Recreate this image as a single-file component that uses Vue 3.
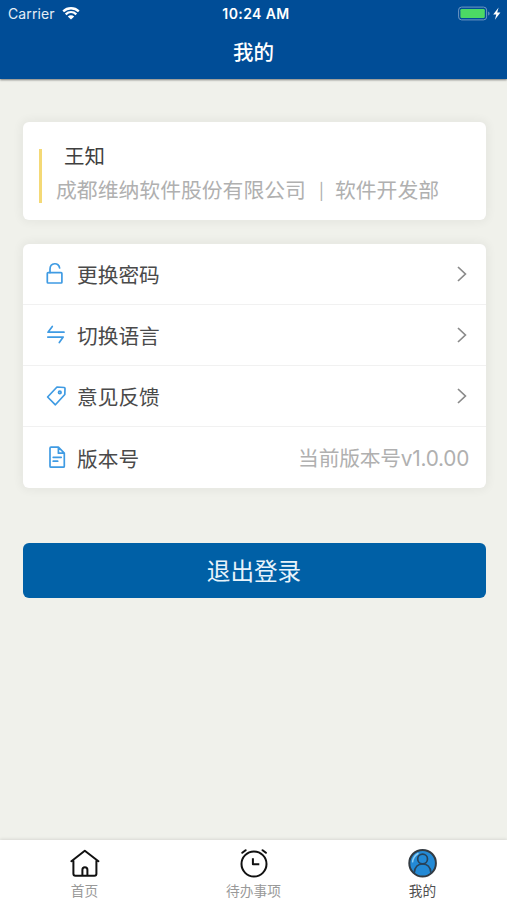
<script setup>
const rows = [
  { icon: 'lock', label: '更换密码' },
  { icon: 'swap', label: '切换语言' },
  { icon: 'tag', label: '意见反馈' },
  { icon: 'doc', label: '版本号', value: '当前版本号v1.0.00' },
]
const tabs = [
  { icon: 'home', label: '首页' },
  { icon: 'clock', label: '待办事项' },
  { icon: 'user', label: '我的', active: true },
]
</script>

<template>
  <div class="screen">
    <header class="top">
      <div class="status">
        <div class="carrier">
          <span>Carrier</span>
          <svg class="wifi" viewBox="0 0 18 13" width="18" height="13">
            <path d="M1.2 4.4C5.6.2 12.4.2 16.8 4.4M3.7 7.3c3.1-2.8 7.5-2.8 10.6 0" fill="none" stroke="#fff" stroke-width="2.3" />
            <path d="M5.8 9.5c1.9-1.6 4.5-1.6 6.4 0L9 12.6z" fill="#fff" />
          </svg>
        </div>
        <div class="time">10:24 AM</div>
        <div class="power">
          <svg viewBox="0 0 44 16" width="44" height="16">
            <rect x=".6" y="1.1" width="28" height="12.8" rx="3" fill="none" stroke="#6f97c3" stroke-width="1" />
            <rect x="2.4" y="2.9" width="24.4" height="9.2" rx="1.4" fill="#4cd964" />
            <path d="M30.2 5.4c1.8.6 1.8 3.6 0 4.2z" fill="#6f97c3" />
            <path d="M40.6 1.5 35.2 8.4h3.1l-1.4 5.3 5.5-7.2h-3.2z" fill="#fff" />
          </svg>
        </div>
      </div>
      <h1 class="title">我的</h1>
    </header>

    <main class="body">
      <section class="card profile">
        <div class="bar"></div>
        <div class="who">
          <div class="name">王知</div>
          <div class="org"><span>成都维纳软件股份有限公司</span><span class="sep">|</span><span>软件开发部</span></div>
        </div>
      </section>

      <section class="card list">
        <div v-for="row in rows" :key="row.icon" class="row">
          <svg class="icon" viewBox="0 0 22 24" width="22" height="24">
            <g v-if="row.icon === 'lock'">
              <rect x="2.3" y="10.6" width="14.6" height="10.4" rx=".8" />
              <path d="M5 10.6V7.2C5 .2 14.2.1 14.6 6" />
            </g>
            <g v-else-if="row.icon === 'swap'">
              <path d="M19 9.200H3L7.300 3.500M2.800 14.100h15.400L14.300 19.500" />
            </g>
            <g v-else-if="row.icon === 'tag'">
              <path d="M12 3 19.200 3.500q.8.100.8.900l-.2 6.100L10.400 20.800 2.600 13z" />
              <circle cx="14.800" cy="8.400" r="1.300" />
            </g>
            <g v-else>
              <path d="M13.400 1.200H6q-1 0-1 1v18q0 1 1 1h12.300q1 0 1-1V7.100zM13.400 1.400v5.800h5.700M8.200 11.300h8M8.200 15.200h4.500" />
            </g>
          </svg>
          <span class="label">{{ row.label }}</span>
          <span v-if="row.value" class="value">{{ row.value }}</span>
          <svg v-else class="chevron" viewBox="0 0 10 16" width="10" height="16">
            <path d="M1 1l7.400 7L1 15" />
          </svg>
        </div>
      </section>

      <button class="logout">退出登录</button>
    </main>

    <nav class="tabs">
      <div v-for="tab in tabs" :key="tab.icon" class="tab" :class="{ active: tab.active }">
        <svg viewBox="0 0 30 30" width="30" height="30">
          <g v-if="tab.icon === 'home'">
            <path d="M1.400 13.200 14.800 2.800 28.400 13.200M3.400 11.800v13.900q0 2 2 2h19q2 0 2-2V11.800M12.400 27.500v-5.700q0-2.500 2.500-2.500t2.500 2.500v5.700" />
          </g>
          <g v-else-if="tab.icon === 'clock'">
            <circle cx="15" cy="16" r="12.500" />
            <path d="M13.900 10.200v6.100h6.400" stroke-linecap="butt" />
            <path d="M3.300 4.800 6.600 2.200M23.600 2.200l3.300 2.600" />
          </g>
          <g v-else class="person">
            <circle cx="14.600" cy="15.200" r="13.300" class="disc" />
            <path d="M4.600 13.800C5.100 9.600 7.400 7 10 5.500" class="shine" />
            <circle cx="14.600" cy="11" r="4.900" />
            <path d="M6.300 24.600c.4-5.600 3.900-8.700 8.300-8.700s7.900 3.100 8.300 8.700" />
          </g>
        </svg>
        <span>{{ tab.label }}</span>
      </div>
    </nav>
  </div>
</template>

<style>
body {
  margin: 0;
}
</style>

<style scoped>
.screen {
  box-sizing: border-box;
  width: 100%;
  height: 900px;
  display: flex;
  flex-direction: column;
  overflow: hidden;
  background: #f0f1eb;
  font-family: Inter, "Noto Sans CJK SC", sans-serif;
}
.top {
  height: 79px;
  flex: none;
  background: #004d97;
  color: #fff;
  box-shadow: 0 1px 2px rgba(0, 0, 0, 0.5);
}
.status {
  height: 27px;
  padding: 0 5px 0 8px;
  display: grid;
  grid-template-columns: 1fr auto 1fr;
  align-items: center;
  font-size: 14px;
}
.carrier {
  display: flex;
  align-items: center;
  gap: 7px;
  color: #e5edf6;
  letter-spacing: 0.1px;
}
.wifi {
  margin-bottom: 1px;
}
.time {
  padding-left: 2px;
  font-weight: 600;
  font-size: 14px;
  letter-spacing: 0.4px;
}
.power {
  display: flex;
  justify-content: flex-end;
}
.title {
  margin: 0;
  height: 50px;
  line-height: 48px;
  text-align: center;
  font-family: "Noto Sans CJK SC", sans-serif;
  font-size: 20.5px;
  font-weight: 500;
}
.body {
  flex: 1;
  display: flex;
  flex-direction: column;
  padding: 43px 21px 0 23px;
}
.card {
  background: #fff;
  border-radius: 6px;
  box-shadow: 0 0 8px 3px rgba(0, 0, 0, 0.045);
}
.profile {
  box-sizing: border-box;
  height: 98px;
  display: flex;
  align-items: center;
  padding: 9px 16px 0;
}
.bar {
  width: 3px;
  height: 54px;
  background: #f4d976;
}
.who {
  padding-left: 14px;
  margin-top: -4px;
}
.name {
  padding-left: 8px;
  font-size: 20.5px;
  line-height: 34px;
  color: #404040;
}
.org {
  display: flex;
  font-size: 20.83px;
  line-height: 34px;
  color: #b0b0b0;
  white-space: nowrap;
}
.sep {
  box-sizing: border-box;
  width: 29px;
  padding-left: 2px;
  text-align: center;
  font-size: 16px;
}
.list {
  margin-top: 24px;
}
.row {
  box-sizing: border-box;
  height: 61px;
  display: flex;
  align-items: center;
  padding: 0 17px 0 22px;
  border-bottom: 1px solid #f1f1f1;
}
.row:last-child {
  border-bottom: 0;
}
.icon {
  fill: none;
  stroke: #3f9be3;
  stroke-width: 1.7;
  stroke-linejoin: round;
  stroke-linecap: round;
}
.label {
  margin-left: 10px;
  flex: 1;
  font-size: 20.7px;
  color: #4a4a4a;
}
.value {
  padding-bottom: 2px;
  font-size: 20.8px;
  letter-spacing: -0.25px;
  color: #b0b0b0;
}
.chevron {
  fill: none;
  stroke: #8a8a8a;
  stroke-width: 1.7;
  margin-right: 2px;
}
.logout {
  margin-top: 55px;
  height: 55px;
  padding: 0 1px 2px 0;
  border: 0;
  border-radius: 6px;
  background: #0060a6;
  color: #e8f3fb;
  font: 400 23.6px "Noto Sans CJK SC", sans-serif;
}
.tabs {
  height: 60px;
  flex: none;
  display: grid;
  grid-template-columns: repeat(3, 1fr);
  background: #fff;
  box-shadow: 0 -1px 3px rgba(0, 0, 0, 0.1);
}
.tab {
  display: flex;
  flex-direction: column;
  align-items: center;
  padding-top: 8px;
  font-size: 13.7px;
  line-height: 26px;
  color: #999;
}
.tab.active {
  color: #505050;
}
.tab svg {
  fill: none;
  stroke: #111;
  stroke-width: 2;
  stroke-linecap: round;
  stroke-linejoin: round;
}
.tab .person {
  stroke: #28435a;
  stroke-width: 1.7;
}
.person .disc {
  fill: #238ad6;
  stroke: #333b42;
  stroke-width: 2;
}
.person .shine {
  stroke: #8fd0f5;
  stroke-width: 1.5;
}
</style>
